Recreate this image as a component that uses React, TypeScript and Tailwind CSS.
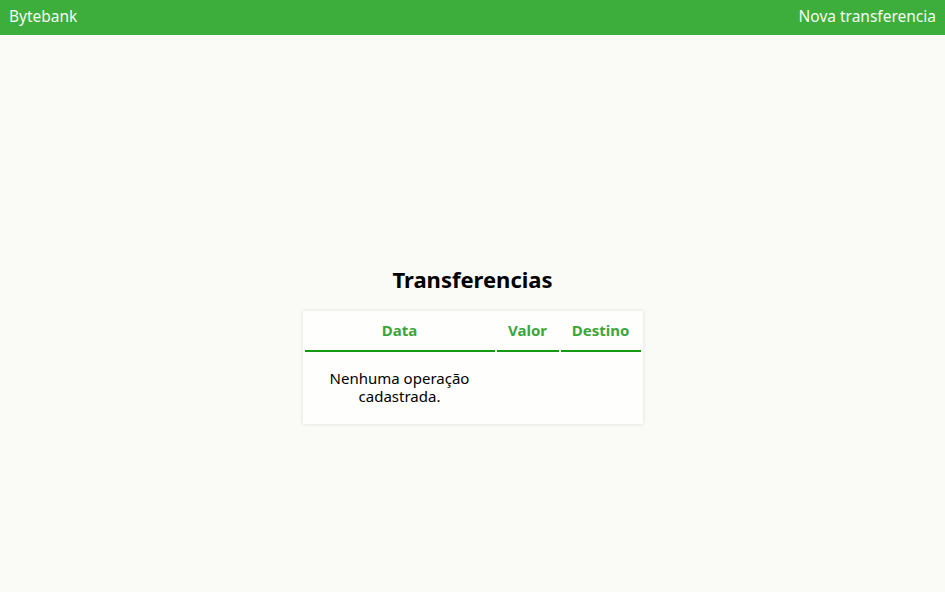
const App = () => {
  return (
    <div
      className="min-h-[592px] bg-[#fafaf7] text-black"
      style={{ fontFamily: '"Noto Sans", "Open Sans", sans-serif' }}
    >
      <header className="h-[35px] bg-[#3dae3b] flex items-center justify-between px-[9px] pb-[2px] text-[15.5px] text-[#f4fbf2]">
        <span>Bytebank</span>
        <span>Nova transferencia</span>
      </header>

      <main className="flex flex-col items-center pt-[229px]">
        <h1 className="text-[22px] font-bold leading-[30px] mb-[17px]">Transferencias</h1>
        <table className="table-fixed w-[340px] border-separate border-spacing-[2px] bg-[#fefefc] shadow-[0_0_4px_rgba(0,0,0,0.12)] text-[15px]">
          <colgroup>
            <col className="w-[190px]" />
            <col className="w-[62px]" />
            <col className="w-[80px]" />
          </colgroup>
          <thead>
            <tr className="text-[#3aa63a] font-bold">
              <th className="pt-[8px] pb-[11px] leading-[18px] border-b-2 border-[#139a13]">Data</th>
              <th className="pt-[8px] pb-[11px] leading-[18px] border-b-2 border-[#139a13]">Valor</th>
              <th className="pt-[8px] pb-[11px] leading-[18px] border-b-2 border-[#139a13]">Destino</th>
            </tr>
          </thead>
          <tbody>
            <tr>
              <td className="px-[16px] pt-[15px] pb-[17px] text-center leading-[18px]">
                Nenhuma operação cadastrada.
              </td>
              <td></td>
              <td></td>
            </tr>
          </tbody>
        </table>
      </main>
    </div>
  );
};

export default App;
